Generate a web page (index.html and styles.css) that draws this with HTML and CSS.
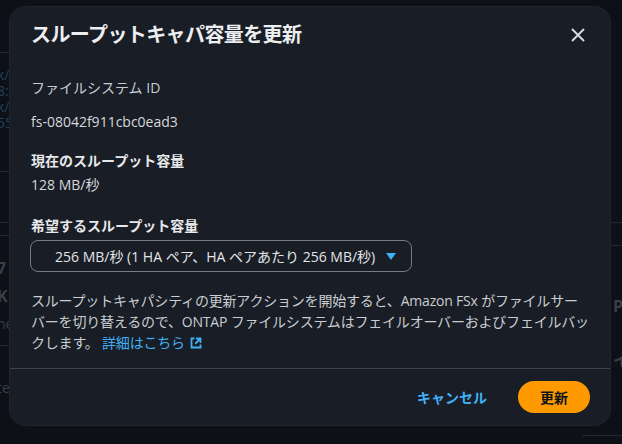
FILE: index.html
```html
<!DOCTYPE html>
<html lang="ja">
<head>
    <meta charset="UTF-8">
    <meta name="viewport" content="width=device-width, initial-scale=1.0">
    <title>スループットキャパ容量を更新</title>
    <link rel="stylesheet" href="styles.css">
</head>
<body>
    <div class="page">
        <div class="side side-left">
            <div class="row r1"></div>
            <div class="row r2"><span class="link">k/</span><span class="link">8:</span><span class="link">k/</span><span class="link">55</span></div>
            <div class="row r3"></div>
            <div class="row r4"></div>
            <div class="row r5"><span class="big">7</span><span class="big">K</span><span class="dim">ne</span></div>
            <div class="row r6"><span class="dim">te</span></div>
        </div>
        <div class="side side-right">
            <div class="row q1"></div>
            <div class="row q2"></div>
            <div class="row q3"><span class="big">P</span></div>
            <div class="row q4"><span class="big">イ</span></div>
        </div>
    </div>

    <div class="modal" role="dialog">
        <div class="modal-header">
            <h2>スループットキャパ容量を更新</h2>
            <button class="close" aria-label="閉じる">
                <svg width="16" height="16" viewBox="0 0 16 16"><path d="M2 2l12 12M14 2L2 14" stroke="currentColor" stroke-width="2" fill="none"/></svg>
            </button>
        </div>
        <div class="modal-body">
            <div class="field first">
                <div class="label light">ファイルシステム ID</div>
                <div class="value">fs-08042f911cbc0ead3</div>
            </div>
            <div class="field">
                <div class="label">現在のスループット容量</div>
                <div class="value">128 MB/秒</div>
            </div>
            <div class="field">
                <div class="label">希望するスループット容量</div>
                <div class="select">
                    <span>256 MB/秒 (1 HA ペア、HA ペアあたり 256 MB/秒)</span>
                    <svg class="caret" width="10" height="7" viewBox="0 0 10 7"><path d="M0 0h10L5 7z" fill="currentColor"/></svg>
                </div>
            </div>
            <p class="note">スループットキャパシティの更新アクションを開始すると、Amazon FSx がファイルサー<br>バーを切り替えるので、ONTAP ファイルシステムはフェイルオーバーおよびフェイルバッ<br>クします。 <a href="#">詳細はこちら <svg width="12" height="12" viewBox="0 0 16 16"><path d="M14 8V2H8M14 2L7 9" stroke="currentColor" stroke-width="2.4" fill="none"/><path d="M6 2H2v12h12v-4" stroke="currentColor" stroke-width="2.4" fill="none"/></svg></a></p>
        </div>
        <div class="modal-footer">
            <button class="btn-link">キャンセル</button>
            <button class="btn-primary">更新</button>
        </div>
    </div>
</body>
</html>
```

FILE: styles.css
```css
body {
    margin: 0;
    padding: 0;
    background-color: #0d1017;
    font-family: 'Open Sans', 'Noto Sans CJK JP', sans-serif;
    font-size: 14px;
    height: 444px;
    overflow: hidden;
}

.page {
    display: flex;
    justify-content: space-between;
    height: 444px;
}

.side {
    width: 40px;
    display: flex;
    flex-direction: column;
    overflow: hidden;
}

.side .row {
    border-bottom: 1px solid #23272e;
    display: flex;
    flex-direction: column;
    font-size: 14px;
    line-height: 16px;
}

.side-left .row {
    margin-left: -3px;
}

.r1 { height: 52px; }
.r2 { height: 119px; padding-top: 14px; box-sizing: border-box; }
.r3 { height: 50px; }
.r4 { height: 12px; }
.r5 { height: 110px; padding-top: 24px; box-sizing: border-box; gap: 12px; }
.r6 { height: 87px; padding-top: 34px; box-sizing: border-box; border-bottom: none !important; }

.q1 { height: 222px; }
.q2 { height: 22px; }
.q3 { height: 90px; padding-top: 52px; box-sizing: border-box; border-bottom: none !important; }
.q4 { height: 100px; padding-top: 16px; box-sizing: border-box; }

.side .link {
    color: #1e4263;
}

.side .big {
    color: #3a3f47;
    font-weight: bold;
    font-size: 16px;
}

.side-right .big {
    padding-left: 31px;
}

.side .dim {
    color: #3a3f47;
}

.modal {
    position: absolute;
    top: 7px;
    left: 10px;
    width: 600px;
    background-color: #191d25;
    border-radius: 16px;
    box-shadow: 0 0 0 1px #20242c;
    color: #d1d5db;
}

.modal-header {
    display: flex;
    justify-content: space-between;
    align-items: center;
    padding: 14px 24px 0 21px;
}

.modal-header h2 {
    margin: 0;
    font-size: 20px;
    line-height: 28px;
    font-weight: bold;
    letter-spacing: -0.6px;
    color: #eceef0;
}

.close {
    background: none;
    border: none;
    padding: 0;
    color: #d5d8dc;
    display: flex;
}

.modal-body {
    padding: 0 20px 0 21px;
}

.field {
    margin-top: 17px;
}

.field.first {
    margin-top: 29px;
}

.label {
    line-height: 20px;
    font-weight: bold;
    color: #e6e8ea;
    margin-bottom: 4px;
}

.label.light {
    font-weight: normal;
    color: #c8ccd1;
    margin-bottom: 14px;
}

.value {
    line-height: 20px;
    color: #d5d8dc;
}

.field.first + .field {
    margin-top: 19px;
}

.field.first + .field + .field {
    margin-top: 21px;
}

.select {
    width: 382px;
    height: 32px;
    box-sizing: border-box;
    border: 1px solid #737c88;
    border-radius: 8px;
    margin-left: -1px;
    padding: 0 15px 0 24px;
    display: flex;
    align-items: center;
    justify-content: space-between;
    color: #e3e5e8;
}

.caret {
    color: #42b0f5;
}

.note {
    margin: 18px 0 0;
    line-height: 21px;
    letter-spacing: -0.2px;
    white-space: nowrap;
    color: #c9cdd2;
    padding-bottom: 15px;
    border-bottom: 1px solid #3d424b;
    margin-left: -21px;
    margin-right: -20px;
    padding-left: 21px;
    padding-right: 8px;
}

.note a {
    color: #42b0f5;
    text-decoration: none;
}

.note a svg {
    vertical-align: -1px;
    margin-left: 2px;
}

.modal-footer {
    display: flex;
    justify-content: flex-end;
    align-items: center;
    gap: 15px;
    padding: 12px 20px 12px;
}

.modal-footer button {
    font-family: inherit;
    font-size: 14px;
    font-weight: bold;
    height: 32px;
    border-radius: 16px;
    border: none;
    cursor: pointer;
}

.btn-link {
    background: none;
    color: #42b0f5;
    padding: 0 16px;
}

.btn-primary {
    background-color: #ff9900;
    color: #0f141a;
    width: 72px;
}
```
